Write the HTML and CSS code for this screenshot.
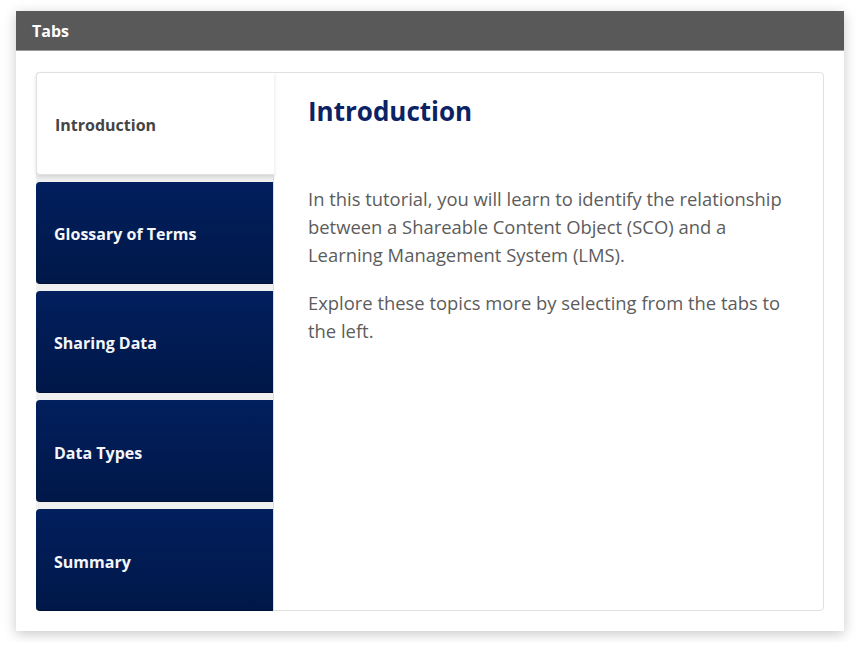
FILE: index.html
```html
<!DOCTYPE html>
<html lang="en">
<head>
<meta charset="utf-8">
<title>Tabs</title>
<link rel="stylesheet" href="styles.css">
</head>
<body>
<div class="window">
  <div class="window-header">Tabs</div>
  <div class="window-body">
    <div class="card">
      <div class="tab-list">
        <div class="tab tab-active">Introduction</div>
        <div class="tab">Glossary of Terms</div>
        <div class="tab">Sharing Data</div>
        <div class="tab">Data Types</div>
        <div class="tab">Summary</div>
      </div>
      <div class="panel">
        <h1 class="panel-title">Introduction</h1>
        <p class="panel-text">In this tutorial, you will learn to identify the relationship between a Shareable Content Object (SCO) and a Learning Management System (LMS).</p>
        <p class="panel-text">Explore these topics more by selecting from the tabs to the left.</p>
      </div>
    </div>
  </div>
</div>
</body>
</html>
```
FILE: styles.css
```css
* { box-sizing: border-box; }
html, body { margin: 0; padding: 0; background: #ffffff; }
body {
  padding: 11px 16px;
  font-family: "Open Sans", "Noto Sans", sans-serif;
}
.window {
  width: 828px;
  height: 620px;
  background: #ffffff;
  box-shadow: 0 3px 12px rgba(0, 0, 0, 0.22);
  display: flex;
  flex-direction: column;
}
.window-header {
  height: 40px;
  background: #595959;
  border-bottom: 1px solid #9a9a9a;
  color: #ffffff;
  font-weight: 700;
  font-size: 16px;
  line-height: 40px;
  padding-left: 16px;
}
.window-body {
  flex: 1;
  padding: 21px 20px 20px 20px;
}
.card {
  height: 539px;
  border: 1px solid #e0e0e0;
  border-radius: 4px;
  display: flex;
  background: #ffffff;
}
.tab-list {
  width: 237px;
  margin: -1px 0 -1px -1px;
  display: flex;
  flex-direction: column;
  gap: 7.5px;
  background: #f0f0f0;
  border-radius: 4px 0 0 4px;
}
.tab {
  flex: 1;
  display: flex;
  align-items: center;
  padding: 4px 0 0 18px;
  font-size: 16px;
  font-weight: 700;
  color: #f4f6fa;
  background: linear-gradient(to bottom, #021f5e, #001848);
  border-radius: 4px 0 0 4px;
  border-bottom: 1px solid #000f33;
}
.tab-active {
  background: #ffffff;
  color: #444444;
  border: 1px solid #e0e0e0;
  border-right: none;
  margin-right: -1px;
  position: relative;
  z-index: 1;
  box-shadow: 0 2px 4px rgba(0, 0, 0, 0.12);
}
.panel {
  flex: 1;
  border-left: 1px solid #dcdcdc;
  padding: 23px 35px 0 34px;
}
.panel-title {
  margin: 0 0 58px 0;
  font-family: "Open Sans", sans-serif;
  font-weight: 700;
  font-size: 26px;
  line-height: 31px;
  color: #0b2265;
}
.panel-text {
  margin: 0 0 20px 0;
  font-size: 18.4px;
  line-height: 28px;
  color: #5c5c5c;
}
```
